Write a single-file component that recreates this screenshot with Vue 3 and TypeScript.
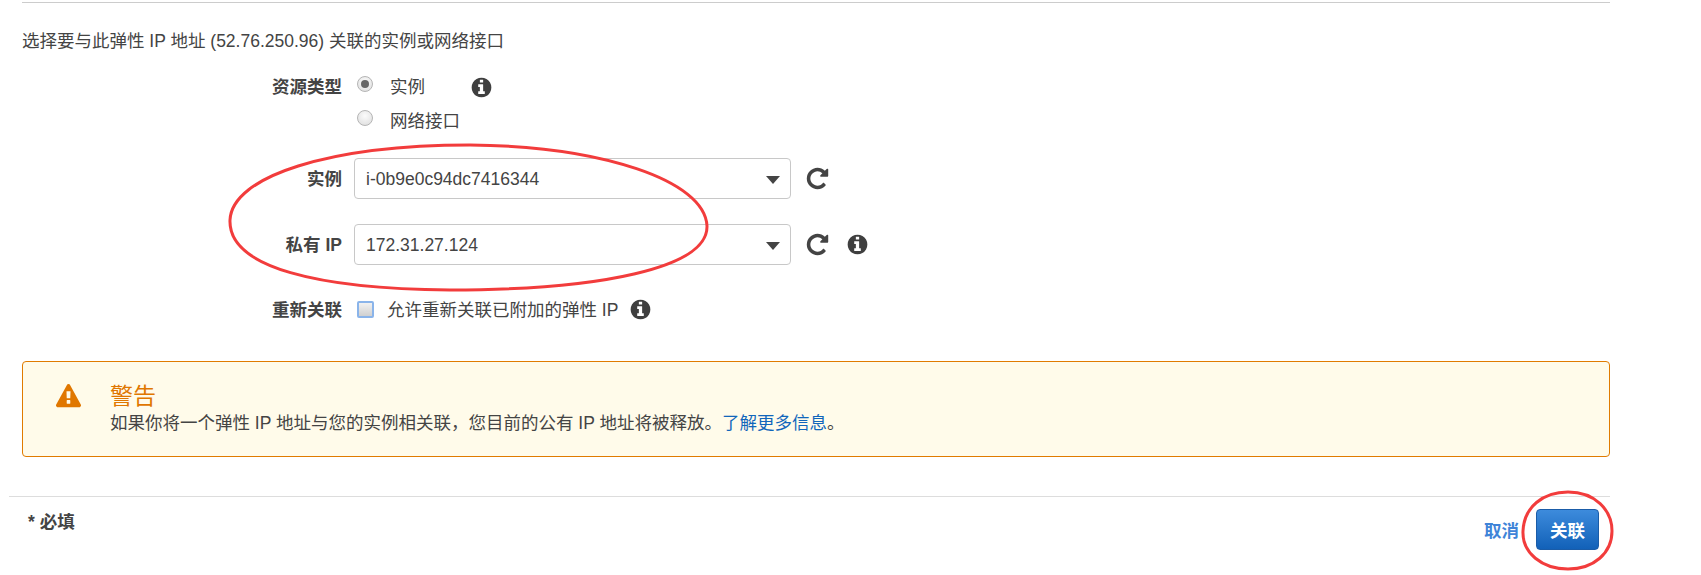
<script setup lang="ts">
const infoPath =
  'M1152 1376v-160q0-14-9-23t-23-9h-96v-512q0-14-9-23t-23-9h-320q-14 0-23 9t-9 23v160q0 14 9 23t23 9h96v320h-96q-14 0-23 9t-9 23v160q0 14 9 23t23 9h448q14 0 23-9t9-23zm-128-896v-160q0-14-9-23t-23-9h-192q-14 0-23 9t-9 23v160q0 14 9 23t23 9h192q14 0 23-9t9-23zm640 416q0 209-103 385.5t-279.5 279.5-385.5 103-385.5-103-279.5-279.5-103-385.5 103-385.5 279.5-279.5 385.5-103 385.5 103 279.5 279.5 103 385.5z'
const refreshPath =
  'M1664 256v448q0 26-19 45t-45 19h-448q-42 0-59-40-17-39 14-69l138-138q-148-137-349-137-104 0-198.5 40.5t-163.5 109.5-109.5 163.5-40.5 198.5 40.5 198.5 109.5 163.5 163.5 109.5 198.5 40.5q119 0 225-52t179-147q7-10 23-12 15 0 25 9l137 138q9 8 9.5 20.5t-7.5 22.5q-109 132-264 204.5t-327 72.5q-156 0-298-61t-245-164-164-245-61-298 61-298 164-245 245-164 298-61q147 0 284.5 55.5t244.5 156.5l130-129q29-31 70-14 39 17 39 59z'
const warnPath =
  'M1024 1375v-190q0-14-9.5-23.5t-22.5-9.5h-192q-13 0-22.5 9.5t-9.5 23.5v190q0 14 9.5 23.5t22.5 9.5h192q13 0 22.5-9.5t9.5-23.5zm-2-374l18-459q0-12-10-19-13-11-24-11h-220q-11 0-24 11-10 7-10 21l17 457q0 10 10 16.5t24 6.5h185q14 0 23.5-6.5t10.5-16.5zm-14-934l768 1408q35 63-2 126-17 29-46.5 46t-63.5 17h-1536q-34 0-63.5-17t-46.5-46q-37-63-2-126l768-1408q17-31 47-49t65-18 65 18 47 49z'
</script>

<template>
  <div class="page">
    <div class="panel">
      <p class="intro">选择要与此弹性 IP 地址 (52.76.250.96) 关联的实例或网络接口</p>

      <div class="form">
        <div class="row radio-row">
          <div class="label">资源类型</div>
          <div class="radios">
            <div class="radio-line">
              <span class="radio checked"></span>
              <span class="radio-text">实例</span>
              <svg class="info info-type" viewBox="0 0 1792 1792"><path :d="infoPath" /></svg>
            </div>
            <div class="radio-line">
              <span class="radio"></span>
              <span class="radio-text">网络接口</span>
            </div>
          </div>
        </div>

        <div class="row select-row first">
          <div class="label">实例</div>
          <div class="select"><span>i-0b9e0c94dc7416344</span><i class="caret"></i></div>
          <svg class="refresh" viewBox="0 0 1792 1792"><path :d="refreshPath" /></svg>
        </div>

        <div class="row select-row second">
          <div class="label">私有 IP</div>
          <div class="select"><span>172.31.27.124</span><i class="caret"></i></div>
          <svg class="refresh" viewBox="0 0 1792 1792"><path :d="refreshPath" /></svg>
          <svg class="info info-ip" viewBox="0 0 1792 1792"><path :d="infoPath" /></svg>
        </div>

        <div class="row check-row">
          <div class="label">重新关联</div>
          <span class="checkbox"></span>
          <span class="check-text">允许重新关联已附加的弹性 IP</span>
          <svg class="info info-check" viewBox="0 0 1792 1792"><path :d="infoPath" /></svg>
        </div>
      </div>

      <div class="alert">
        <svg class="warn" viewBox="0 0 1792 1792"><path :d="warnPath" /></svg>
        <div class="alert-body">
          <div class="alert-title">警告</div>
          <div class="alert-text">如果你将一个弹性 IP 地址与您的实例相关联，您目前的公有 IP 地址将被释放。<a class="more">了解更多信息</a>。</div>
        </div>
      </div>
    </div>

    <div class="footer">
      <div class="required">* 必填</div>
      <div class="actions">
        <a class="cancel">取消</a>
        <button class="submit">关联</button>
      </div>
    </div>

    <!-- red hand-drawn annotations on top of the shot -->
    <svg class="marks" width="1701" height="575" viewBox="0 0 1701 575">
      <path d="M230 220 C232 176 330 145 470 145 C600 146 705 180 707 226 C708 268 600 290 450 290 C320 289 228 268 230 220 Z" />
      <path d="M1523 531 C1524 507 1543 492 1568 492 C1595 492 1612 510 1612 531 C1612 553 1594 569 1568 569 C1542 569 1522 553 1523 531 Z" />
    </svg>
  </div>
</template>

<style>
html,
body {
  background: #fff;
}
</style>

<style scoped>
.page {
  position: relative;
  width: 1701px;
  height: 575px;
  overflow: hidden;
  font-family: "Liberation Sans", "Noto Sans CJK SC", sans-serif;
  font-size: 17.5px;
  line-height: 20px;
  color: #444;
}

.panel {
  width: 1588px;
  margin: 2px 0 0 22px;
  border-top: 1px solid #ccc;
}

.intro {
  margin: 0;
  padding-top: 28px;
}

.form {
  padding-top: 26px;
}

.row {
  display: flex;
  align-items: center;
}

.label {
  width: 320px;
  text-align: right;
  font-weight: 700;
  flex-shrink: 0;
}

.radio-row {
  align-items: flex-start;
}

.radio-line {
  display: flex;
  align-items: center;
  height: 20px;
  margin-bottom: 14px;
  margin-left: 15px;
}

.radio {
  width: 16px;
  height: 16px;
  margin-top: -6px;
  border-radius: 50%;
  border: 1px solid #b5b5b5;
  box-sizing: border-box;
  background: radial-gradient(circle at 50% 35%, #fbfbfb, #dcdcdc);
  position: relative;
}

.radio.checked::after {
  content: "";
  position: absolute;
  left: 3px;
  top: 3px;
  width: 8px;
  height: 8px;
  border-radius: 50%;
  background: #666;
}

.radio-text {
  margin-left: 17px;
}

.info {
  fill: #3f3f3f;
  width: 23px;
  height: 23px;
  flex-shrink: 0;
}

.info-type {
  margin-left: 45px;
}

.select-row.first {
  margin-top: 13px;
}

.select-row.second {
  margin-top: 25px;
}

.select {
  width: 437px;
  height: 41px;
  margin-left: 12px;
  padding: 0 10px 0 11px;
  box-sizing: border-box;
  display: flex;
  align-items: center;
  justify-content: space-between;
  border: 1px solid #c8c8c8;
  border-radius: 4px;
  background: #fff;
}

.caret {
  width: 0;
  height: 0;
  border-left: 7px solid transparent;
  border-right: 7px solid transparent;
  border-top: 8px solid #444;
  margin-top: 2px;
}

.refresh {
  width: 25px;
  height: 25px;
  margin-left: 14px;
  fill: #444;
}

.info-ip {
  margin-left: 16px;
}

.check-row {
  margin-top: 33px;
}

.checkbox {
  width: 17px;
  height: 17px;
  margin-left: 15px;
  box-sizing: border-box;
  border: 2px solid #8ab4ea;
  border-radius: 2px;
  background: linear-gradient(#f1f1f1, #d0d0d0);
}

.check-text {
  margin-left: 13px;
}

.info-check {
  margin-left: 11px;
}

.alert {
  margin-top: 40px;
  height: 96px;
  box-sizing: border-box;
  display: flex;
  border: 1px solid #e07b00;
  border-radius: 4px;
  background: #fffbea;
}

.warn {
  width: 25px;
  height: 25px;
  margin: 22px 0 0 33px;
  fill: #e07700;
  flex-shrink: 0;
}

.alert-body {
  margin-left: 29px;
  padding-top: 20px;
}

.alert-title {
  font-size: 23px;
  line-height: 28px;
  color: #e07700;
}

.alert-text {
  margin-top: 3px;
}

.more {
  color: #1166bb;
}

.footer {
  width: 1601px;
  margin: 39px 0 0 9px;
  padding-top: 12px;
  box-sizing: border-box;
  border-top: 1px solid #ddd;
  display: flex;
  justify-content: space-between;
  align-items: flex-start;
}

.required {
  margin: 3px 0 0 19px;
  font-weight: 700;
}

.actions {
  display: flex;
  align-items: center;
  gap: 17px;
  padding-right: 11px;
}

.cancel {
  color: #3f84d8;
  font-weight: 700;
  margin-top: 2px;
}

.submit {
  width: 63px;
  height: 41px;
  padding: 0;
  border: 1px solid #1a5ca8;
  border-radius: 4px;
  background: linear-gradient(#3d8bdc, #1261b8);
  color: #fff;
  font: 700 17.5px "Liberation Sans", "Noto Sans CJK SC", sans-serif;
}

.marks {
  position: absolute;
  left: 0;
  top: 0;
  pointer-events: none;
}

.marks path {
  fill: none;
  stroke: #f23c3c;
  stroke-width: 3;
}
</style>
